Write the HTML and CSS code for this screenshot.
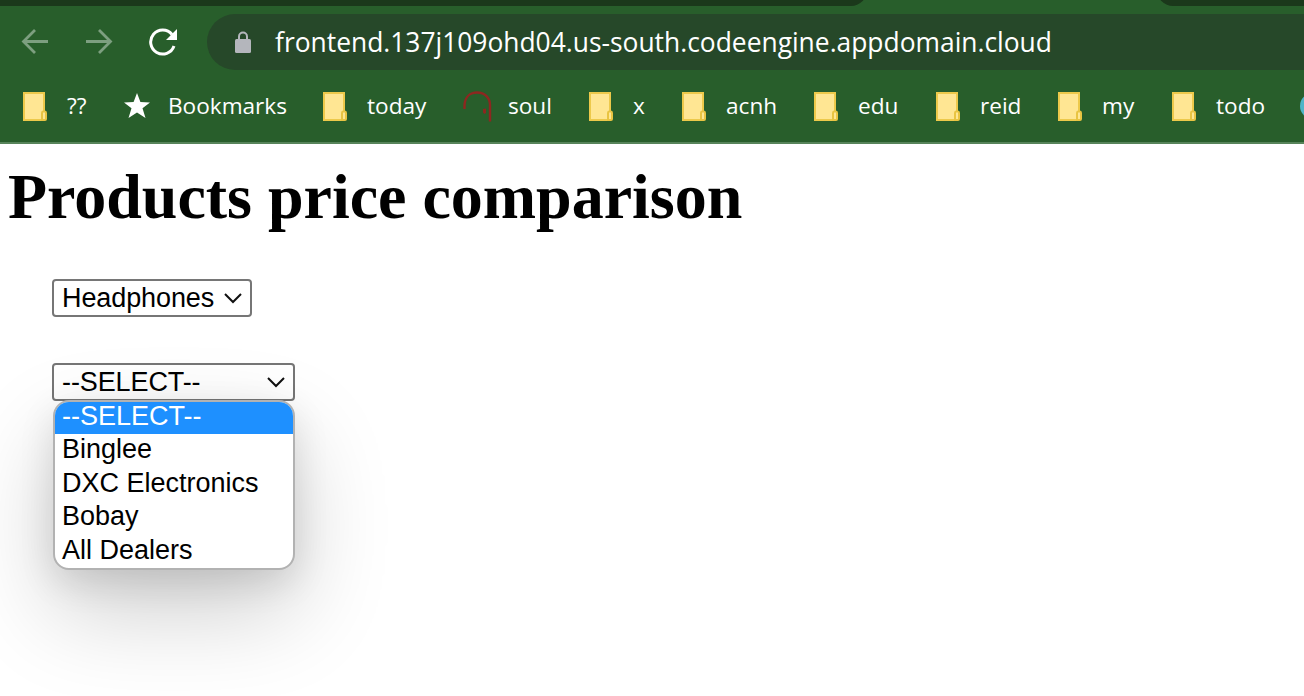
FILE: index.html
```html
<!DOCTYPE html>
<html lang="en">
<head>
<meta charset="utf-8">
<title>Products price comparison</title>
<link rel="stylesheet" href="styles.css">
</head>
<body>
<svg class="symbols" width="0" height="0">
  <symbol id="folder" viewBox="0 0 32 32">
    <path d="M4 3H24V21.500H25.500Q26 21.500 26 23V29Q26 30 25 30H4Z" fill="#ffe693"/>
    <path d="M22 30H4V3H24V21.500" fill="none" stroke="#edc94b" stroke-width="2"/>
    <path d="M22 30V23Q22 21.500 23 21.500H25Q26 21.500 26 23V29Q26 30 25 30Z" fill="#ffe693" stroke="#e9c442" stroke-width="2"/>
  </symbol>
</svg>
<header class="browser">
  <div class="tabs"><span class="tab-left"></span><span class="tab-right"></span></div>
  <div class="toolbar">
    <svg class="nav" viewBox="0 0 28 28"><path d="M27 13.500H3M14 2L2.500 13.500L14 25" fill="none" stroke="#7d9f80" stroke-width="2.800"/></svg>
    <svg class="nav" viewBox="0 0 28 28"><path d="M1 13.500H25M14 2L25.500 13.500L14 25" fill="none" stroke="#7d9f80" stroke-width="2.800"/></svg>
    <svg class="nav" viewBox="0 0 28 28"><path d="M25 18A12 12 0 1 1 23 6.500" fill="none" stroke="#fff" stroke-width="3"/><path d="M28 1V12H17Z" fill="#fff"/></svg>
    <div class="address">
      <svg class="lock" viewBox="0 0 16 22"><path d="M4 9V5.500A4 4 0 0 1 12 5.500V9" fill="none" stroke="#b4b6bc" stroke-width="2"/><rect y="8" width="16" height="14" rx="1.500" fill="#b4b6bc"/></svg>
      <span class="url">frontend.137j109ohd04.us-south.codeengine.appdomain.cloud</span>
    </div>
  </div>
  <nav class="bookmarks">
    <a class="mark"><svg class="icon"><use href="#folder"/></svg><span>??</span></a>
    <a class="mark"><svg class="icon" viewBox="0 0 32 32"><path d="M16 3L19.400 12L29 12.400L21.500 18.300L24.500 28L16 22.500L7.500 28L10.500 18.300L3 12.400L12.600 12Z" fill="#fff"/></svg><span>Bookmarks</span></a>
    <a class="mark"><svg class="icon"><use href="#folder"/></svg><span>today</span></a>
    <a class="mark"><svg class="icon" viewBox="0 0 32 32"><path d="M3.500 19V15C4 7 9 2.500 16 2.500C24 2.500 29 8 29 15V31.500" fill="none" stroke="#8d2720" stroke-width="2.400"/><path d="M22 19L25 18.500V23L23.500 24L22 22.500Z" fill="#8d2720"/></svg><span>soul</span></a>
    <a class="mark"><svg class="icon"><use href="#folder"/></svg><span>x</span></a>
    <a class="mark"><svg class="icon"><use href="#folder"/></svg><span>acnh</span></a>
    <a class="mark"><svg class="icon"><use href="#folder"/></svg><span>edu</span></a>
    <a class="mark"><svg class="icon"><use href="#folder"/></svg><span>reid</span></a>
    <a class="mark"><svg class="icon"><use href="#folder"/></svg><span>my</span></a>
    <a class="mark"><svg class="icon"><use href="#folder"/></svg><span>todo</span></a>
    <a class="mark"><svg class="icon" viewBox="0 0 32 32"><circle cx="16" cy="16" r="13" fill="#4fb5c8"/></svg></a>
  </nav>
</header>
<main class="page">
  <h1 class="title">Products price comparison</h1>
  <div class="select product"><span class="value">Headphones</span><svg class="chevron" viewBox="0 0 20 12"><path d="M2 2L10 10L18 2" fill="none" stroke="#101010" stroke-width="2"/></svg></div>
  <div class="select dealer"><span class="value">--SELECT--</span><svg class="chevron" viewBox="0 0 20 12"><path d="M2 2L10 10L18 2" fill="none" stroke="#101010" stroke-width="2"/></svg>
    <ul class="menu">
      <li class="option active">--SELECT--</li>
      <li class="option">Binglee</li>
      <li class="option">DXC Electronics</li>
      <li class="option">Bobay</li>
      <li class="option">All Dealers</li>
    </ul>
  </div>
</main>
</body>
</html>
```
FILE: styles.css
```css
* { box-sizing: border-box; }
body { margin: 0; background: #fff; height: 696px; overflow: hidden; }
.symbols { display: block; height: 0; }
.browser { height: 144px; background: #285e2b; border-bottom: 2px solid #57845a; color: #fff; font-family: "Open Sans", sans-serif; }
.tabs { height: 6px; display: flex; justify-content: space-between; overflow: hidden; align-items: flex-end; }
.tab-left, .tab-right { height: 20px; flex: none; background: #1b381b; }
.tab-left { width: 867px; border-bottom-right-radius: 16px; }
.tab-right { width: 147px; border-bottom-left-radius: 16px; }
.toolbar { height: 72px; padding: 8px 0; display: flex; align-items: center; }
.nav { width: 28px; height: 28px; margin-left: 36px; flex: none; }
.nav:first-child { margin-left: 21px; }
.address { flex: 1; margin-left: 30px; height: 56px; border-radius: 28px 0 0 28px; background: #264829; display: flex; align-items: center; padding-left: 28px; }
.lock { width: 16px; height: 22px; flex: none; margin-right: 24px; }
.url { font-size: 26.4px; line-height: 36px; white-space: nowrap; }
.bookmarks { display: grid; grid-template-columns: 101px 199px 141px 125px 93px 132px 122px 122px 114px 128px 32px; padding-left: 20px; height: 56px; align-items: center; overflow: hidden; }
.mark { display: flex; align-items: center; font-size: 22.6px; line-height: 32px; white-space: nowrap; }
.icon { width: 32px; height: 32px; margin-right: 15px; flex: none; }
.page { padding: 16px 0 0 8px; }
.title { margin: 0 0 45px; font: bold 64px/74px "Liberation Serif", serif; letter-spacing: -0.02px; white-space: nowrap; }
.select { position: relative; display: flex; justify-content: space-between; align-items: center; height: 38px; margin-left: 44px; padding: 0 7px 0 8px; border: 2px solid #767676; border-radius: 4px; font: 27px/32px "Liberation Sans", sans-serif; color: #000; background: #fff; white-space: nowrap; }
.value { letter-spacing: -0.1px; }
.product { width: 200px; margin-bottom: 46px; }
.dealer { width: 243px; }
.chevron { width: 20px; height: 12px; flex: none; }
.menu { position: absolute; left: -1px; top: 35px; width: 242px; height: 170px; margin: 0; padding: 0; list-style: none; border: 2px solid #b2b2b2; border-radius: 16px; overflow: hidden; background: #fff; box-shadow: 0 40px 96px rgba(0,0,0,.2), 0 12px 36px rgba(0,0,0,.11); }
.option { height: 33.5px; line-height: 30px; padding-left: 7px; }
.active { background: #1e90ff; color: #fff; height: 32px; line-height: 28px; }
```
